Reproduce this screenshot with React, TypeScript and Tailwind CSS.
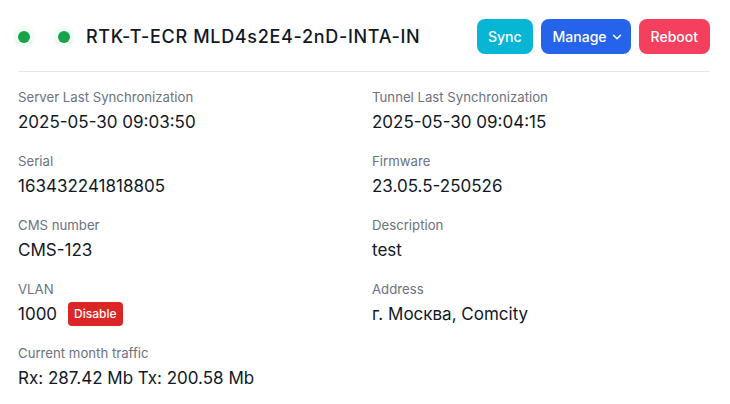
import { ChevronDown } from "lucide-react";

interface Campo {
  etiqueta: string;
  valor: string;
  vlan?: boolean;
}

const campos: Campo[] = [
  { etiqueta: "Server Last Synchronization", valor: "2025-05-30 09:03:50" },
  { etiqueta: "Tunnel Last Synchronization", valor: "2025-05-30 09:04:15" },
  { etiqueta: "Serial", valor: "163432241818805" },
  { etiqueta: "Firmware", valor: "23.05.5-250526" },
  { etiqueta: "CMS number", valor: "CMS-123" },
  { etiqueta: "Description", valor: "test" },
  { etiqueta: "VLAN", valor: "1000", vlan: true },
  { etiqueta: "Address", valor: "г. Москва, Comcity" },
  { etiqueta: "Current month traffic", valor: "Rx: 287.42 Mb Tx: 200.58 Mb" },
];

// punto de estado con halo verde claro
const Punto = () => (
  <span className="block w-3 h-3 rounded-full bg-[#16a34a] ring-[5px] ring-[#f0fdf4]" />
);

export default function App() {
  return (
    <div className="w-[730px] h-[404px] bg-white pl-[18px] pr-[20px] pt-[19px] font-['Inter',sans-serif] text-[#111827]">
      {/* cabecera */}
      <div className="flex items-center h-[35px]">
        <Punto />
        <span className="ml-7">
          <Punto />
        </span>
        <h1 className="ml-4 text-[18px] font-medium tracking-[0.68px]">
          RTK-T-ECR MLD4s2E4-2nD-INTA-IN
        </h1>
        <div className="ml-auto flex gap-2">
          <button className="h-[35px] px-[11px] rounded-lg bg-[#06b6d4] text-white text-[14px] font-medium">
            Sync
          </button>
          <button className="h-[35px] pl-3 pr-[7px] rounded-lg bg-[#2563eb] text-white text-[14px] font-medium flex items-center gap-[3px]">
            Manage
            <ChevronDown size={14} strokeWidth={2.5} />
          </button>
          <button className="h-[35px] px-3 rounded-lg bg-[#f43f5e] text-white text-[14px] font-medium">
            Reboot
          </button>
        </div>
      </div>

      <div className="mt-[17px] border-t border-[#e5e7eb]" />

      {/* datos del equipo */}
      <div className="mt-[15px] grid grid-cols-2 gap-x-4 gap-y-[17px]">
        {campos.map((c) => (
          <div key={c.etiqueta}>
            <div className="text-[13.2px] leading-[20px] text-[#6b7280]">{c.etiqueta}</div>
            <div className="mt-[3px] flex items-center h-[24px] text-[17px] leading-[24px]">
              {c.valor}
              {c.vlan && (
                <span className="ml-[11px] h-6 px-[6px] rounded bg-[#dc2626] text-white text-[12px] font-medium flex items-center">
                  Disable
                </span>
              )}
            </div>
          </div>
        ))}
      </div>
    </div>
  );
}
